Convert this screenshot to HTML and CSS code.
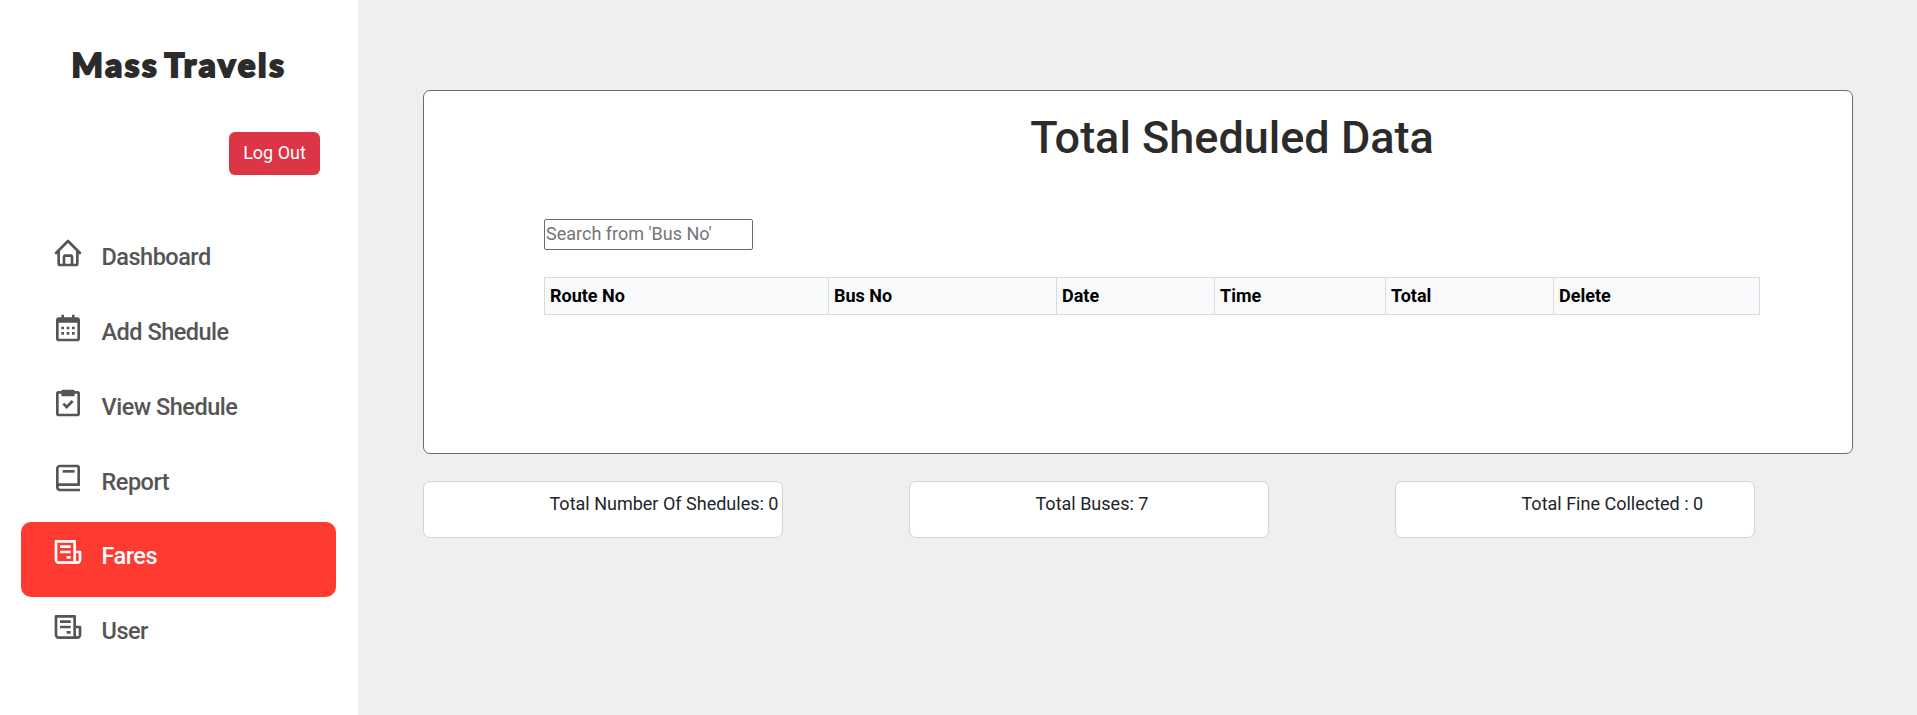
FILE: index.html
```html
<!DOCTYPE html>
<html lang="en">
<head>
<meta charset="utf-8">
<title>Mass Travels</title>
<link rel="stylesheet" href="styles.css">
</head>
<body>
<div class="layout">
  <aside class="sidebar">
    <h2 class="brand">Mass Travels</h2>
    <div class="account"><button class="logout" type="button">Log Out</button></div>
    <nav class="menu">
      <a class="item"><svg class="icon" viewBox="0 0 24 24"><path d="M3 13h1v7c0 1.103.897 2 2 2h12c1.103 0 2-.897 2-2v-7h1a1 1 0 0 0 .707-1.707l-9-9a.999.999 0 0 0-1.414 0l-9 9A1 1 0 0 0 3 13zm7 7v-5h4v5h-4zm2-15.586 6 6V15l.001 5H16v-5c0-1.103-.897-2-2-2h-4c-1.103 0-2 .897-2 2v5H6v-9.586l6-6z"/></svg><span class="label">Dashboard</span></a>
      <a class="item"><svg class="icon" viewBox="0 0 24 24"><path d="M7 11h2v2H7zm0 4h2v2H7zm4-4h2v2h-2zm0 4h2v2h-2zm4-4h2v2h-2zm0 4h2v2h-2z"/><path d="M5 22h14c1.103 0 2-.897 2-2V6c0-1.103-.897-2-2-2h-2V2h-2v2H9V2H7v2H5c-1.103 0-2 .897-2 2v14c0 1.103.897 2 2 2zM19 8l.001 12H5V8h14z"/></svg><span class="label">Add Shedule</span></a>
      <a class="item"><svg class="icon" viewBox="0 0 24 24"><path d="M5 22h14c1.103 0 2-.897 2-2V5a2 2 0 0 0-2-2h-2a1 1 0 0 0-1-1H8a1 1 0 0 0-1 1H5a2 2 0 0 0-2 2v15c0 1.103.897 2 2 2zM5 5h2v2h10V5h2v15H5V5z"/><path d="m11 13.586-1.793-1.793-1.414 1.414L11 16.414l5.207-5.207-1.414-1.414z"/></svg><span class="label">View Shedule</span></a>
      <a class="item"><svg class="icon" viewBox="0 0 24 24"><path d="M6 22h15v-2H6.012C5.55 19.988 5 19.805 5 19s.55-.988 1.012-1H21V4c0-1.103-.897-2-2-2H6c-1.206 0-3 .799-3 3v14c0 2.201 1.794 3 3 3zM5 8V5c0-.805.55-.988 1-1h13v12H5V8z"/><path d="M8 6h9v2H8z"/></svg><span class="label">Report</span></a>
      <a class="item active"><svg class="icon" viewBox="0 0 24 24"><path d="M21 11h-3V4a1 1 0 0 0-1-1H3a1 1 0 0 0-1 1v14c0 1.654 1.346 3 3 3h14c1.654 0 3-1.346 3-3v-6a1 1 0 0 0-1-1zM5 19a1 1 0 0 1-1-1V5h12v13c0 .351.061.688.171 1H5zm15-1a1 1 0 0 1-2 0v-5h2v5z"/><path d="M6 7h8v2H6zm0 4h8v2H6zm5 4h3v2h-3z"/></svg><span class="label">Fares</span></a>
      <a class="item"><svg class="icon" viewBox="0 0 24 24"><path d="M21 11h-3V4a1 1 0 0 0-1-1H3a1 1 0 0 0-1 1v14c0 1.654 1.346 3 3 3h14c1.654 0 3-1.346 3-3v-6a1 1 0 0 0-1-1zM5 19a1 1 0 0 1-1-1V5h12v13c0 .351.061.688.171 1H5zm15-1a1 1 0 0 1-2 0v-5h2v5z"/><path d="M6 7h8v2H6zm0 4h8v2H6zm5 4h3v2h-3z"/></svg><span class="label">User</span></a>
    </nav>
  </aside>
  <main class="content">
    <section class="panel">
      <h1 class="title">Total Sheduled Data</h1>
      <input class="search" type="text" placeholder="Search from 'Bus No'">
      <table class="table">
        <colgroup><col class="c-route"><col class="c-bus"><col class="c-date"><col class="c-time"><col class="c-total"><col class="c-delete"></colgroup>
        <thead><tr><th>Route No</th><th>Bus No</th><th>Date</th><th>Time</th><th>Total</th><th>Delete</th></tr></thead>
      </table>
    </section>
    <section class="stats">
      <div class="stat">Total Number Of Shedules: 0</div>
      <div class="stat">Total Buses: 7</div>
      <div class="stat">Total Fine Collected : 0</div>
    </section>
  </main>
</div>
</body>
</html>
```
FILE: styles.css
```css
* { box-sizing: border-box; }
body {
  margin: 0;
  font: 18px/27px Roboto, sans-serif;
  color: #212529;
  background: #efefef;
}
.layout { display: flex; height: 715px; overflow: hidden; }
.sidebar {
  flex: 0 0 358px;
  background: #fff;
  padding: 41px 22.5px 0 20.5px;
}
.brand {
  margin: 0 0 0 51px;
  font: 900 33px/46px Lato, sans-serif;
  letter-spacing: 2.7px;
  word-spacing: -4.5px;
  color: #2b2b2b;
  -webkit-text-stroke: 2px #2b2b2b;
  stroke-linejoin: round;
  white-space: nowrap;
}
.account { display: flex; justify-content: flex-end; padding: 45px 15.5px 0 0; }
.logout {
  width: 91px;
  height: 43px;
  padding: 0 0 2px;
  border: 0;
  border-radius: 6px;
  background: #dc3545;
  color: #fff;
  font: 18px/27px Roboto, sans-serif;
}
.menu { padding-top: 48.2px; }
.item {
  display: flex;
  align-items: flex-start;
  gap: 17.5px;
  height: 74.8px;
  padding: 14px 31px 0 31.5px;
  border-radius: 10px;
  color: #555;
}
.item.active { background: #ff3a30; color: #fff; }
.icon { width: 32px; height: 32px; fill: currentColor; }
.label {
  padding-top: 2px;
  font-size: 23.5px;
  line-height: 36px;
  font-weight: 500;
  letter-spacing: -0.5px;
}
.content { flex: 1; padding: 90px 64px 0 65px; }
.panel {
  width: 1430px;
  height: 364px;
  padding: 23px 92px 0 120px;
  border: 1px solid #6c6c6c;
  border-radius: 7px;
  background: #fff;
}
.title {
  height: 54px;
  margin: 0 -92px 51px 68px;
  text-align: center;
  font-size: 45px;
  line-height: 48px;
  font-weight: 500;
  color: #2b2b2b;
}
.search {
  display: block;
  width: 209px;
  height: 31px;
  padding: 0 1px 2px;
  border: 1px solid #6b6b6b;
  border-radius: 2px;
  font: 18px/27px Roboto, sans-serif;
}
.search::placeholder { color: #757575; }
.table {
  width: 1216px;
  margin-top: 27px;
  table-layout: fixed;
  border-collapse: collapse;
}
.table th {
  height: 37px;
  padding: 0 5px 2px;
  border: 1px solid #dadde0;
  background: #f8f9fb;
  text-align: left;
  font-weight: 700;
  color: #000;
}
.c-route { width: 284px; }
.c-bus { width: 228px; }
.c-date { width: 158px; }
.c-time { width: 171px; }
.c-total { width: 168px; }
.stats { display: flex; gap: 126px; padding-top: 27px; }
.stat {
  flex: 0 0 360px;
  height: 57px;
  padding: 8px 0 0 125.5px;
  border: 1px solid #d3d3d3;
  border-radius: 7px;
  background: #fff;
  white-space: nowrap;
}
```
